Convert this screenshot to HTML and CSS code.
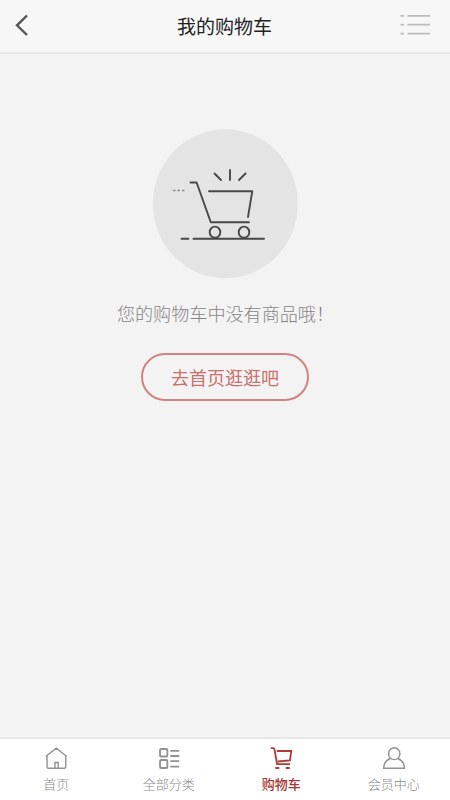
FILE: index.html
```
<!DOCTYPE html>
<html lang="zh-CN">
<head>
<meta charset="utf-8">
<title>我的购物车</title>
<link rel="stylesheet" href="styles.css">
</head>
<body>
<header class="header">
  <svg class="back" width="16" height="24" viewBox="14 13 16 24"><path d="M27 15.5 17 25.3l10 9.7"/></svg>
  <h1 class="title">我的购物车</h1>
  <svg class="menu" width="32" height="24" viewBox="399 13 32 24"><path d="M400.5 15.8h3.5M407.5 15.8H430M400.5 24.6h3.5M407.5 24.6H430M400.5 33.7h3.5M407.5 33.7H430"/></svg>
</header>
<main class="empty">
  <svg class="cart" width="146" height="150" viewBox="152 128.5 146 150">
    <ellipse class="disc" cx="225.3" cy="203.3" rx="72.5" ry="74.5"/>
    <path d="M190.500 182h6.100l14.200 39.800H249M209 190.700H252.300L248 216.500"/>
    <path d="M214.500 173l6.500 6.500M230 169.500v10M245.500 173l-6.500 6.500"/>
    <ellipse cx="215" cy="231.700" rx="5.300" ry="5.600"/>
    <ellipse cx="244" cy="231.700" rx="5.300" ry="5.600"/>
    <path d="M181.500 238.200h7M193.500 238.200h70.500"/>
    <path class="dots" d="M173 190h2.500M177.500 190h2.500M182 190h2.500"/>
  </svg>
  <p class="message">您的购物车中没有商品哦！</p>
  <a class="button">去首页逛逛吧</a>
</main>
<nav class="tabs">
  <a class="tab">
    <svg width="24" height="24" viewBox="44.250 746 24 24"><path d="M46 756.500 56.500 748.200 67 756.500M47.300 756v10.800q0 1.500 1.500 1.500h15.700q1.500 0 1.500-1.500V756M55.200 768v-5.500h3.300v5.500"/></svg>
    <span>首页</span>
  </a>
  <a class="tab">
    <svg class="bold" width="24" height="24" viewBox="156.750 746 24 24"><rect x="159.800" y="749" width="7.300" height="7.500" rx="1"/><rect x="159.800" y="760" width="7.300" height="8" rx="1"/><path d="M170 750.800h9M170 756h9M170 761.200h9M170 766.700h9"/></svg>
    <span>全部分类</span>
  </a>
  <a class="tab active">
    <svg width="24" height="24" viewBox="269.250 746 24 24"><path d="M271 748.200h2.500q1 0 1.300 1.300L277.300 764.200h13M277 751h14.500l-1.300 9.300L278 761.500"/><path d="M275.500 768h4M286 768h4"/></svg>
    <span>购物车</span>
  </a>
  <a class="tab">
    <svg width="24" height="24" viewBox="381.750 746 24 24"><ellipse cx="394" cy="753.700" rx="5.700" ry="5.900"/><path d="M390 758.500c-4 1.500-6.300 4.800-6.600 9.700h20.800c-.3-4.900-2.600-8.200-6.600-9.700"/></svg>
    <span>会员中心</span>
  </a>
</nav>
</body>
</html>
```

FILE: styles.css
```
* { box-sizing: border-box; }
body {
  margin: 0;
  height: 800px;
  display: flex;
  flex-direction: column;
  background: #f3f3f3;
  font-family: "Noto Sans CJK SC", sans-serif;
}
svg { display: block; fill: none; }
.header {
  height: 54px;
  padding: 0 19px 3px 14px;
  display: grid;
  grid-template-columns: 32px 1fr 32px;
  align-items: center;
  background: #f7f7f7;
  border-bottom: 2px solid #e6e6e6;
}
.back { stroke: #555; stroke-width: 2.4; }
.menu { stroke: #bcbcbc; stroke-width: 1.8; }
.title {
  margin: 3px 0 0;
  padding-left: 4px;
  text-align: center;
  font-size: 19px;
  line-height: 28px;
  font-weight: 400;
  color: #222;
}
.empty {
  flex: 1;
  display: flex;
  flex-direction: column;
  align-items: center;
  padding-top: 74.5px;
}
.cart { stroke: #484848; stroke-width: 1.9; stroke-linecap: round; stroke-linejoin: round; }
.disc { fill: #e4e4e4; stroke: none; }
.dots { stroke: #888; stroke-width: 1.5; stroke-linecap: butt; }
.message {
  margin: 20px 0 0;
  padding-left: 1px;
  font-size: 18.1px;
  line-height: 28px;
  font-weight: 300;
  color: #858585;
}
.button {
  width: 168px;
  height: 48px;
  margin-top: 26px;
  border: 2px solid #d08480;
  border-radius: 24px;
  text-align: center;
  font-size: 18px;
  line-height: 45px;
  color: #c9706c;
}
.tabs {
  height: 63px;
  display: grid;
  grid-template-columns: repeat(4, 1fr);
  background: #fff;
  border-top: 2px solid #e8e8e8;
}
.tab {
  display: flex;
  flex-direction: column;
  align-items: center;
  padding-top: 7px;
  font-size: 13px;
  line-height: 18px;
  font-weight: 300;
  color: #888;
}
.tab svg { stroke: #929292; stroke-width: 1.4; }
.tab .bold { stroke-width: 1.8; }
.tab span { margin-top: 5px; }
.active { color: #a93434; font-weight: 500; }
.active svg { stroke: #b03a38; stroke-width: 1.8; }
```
